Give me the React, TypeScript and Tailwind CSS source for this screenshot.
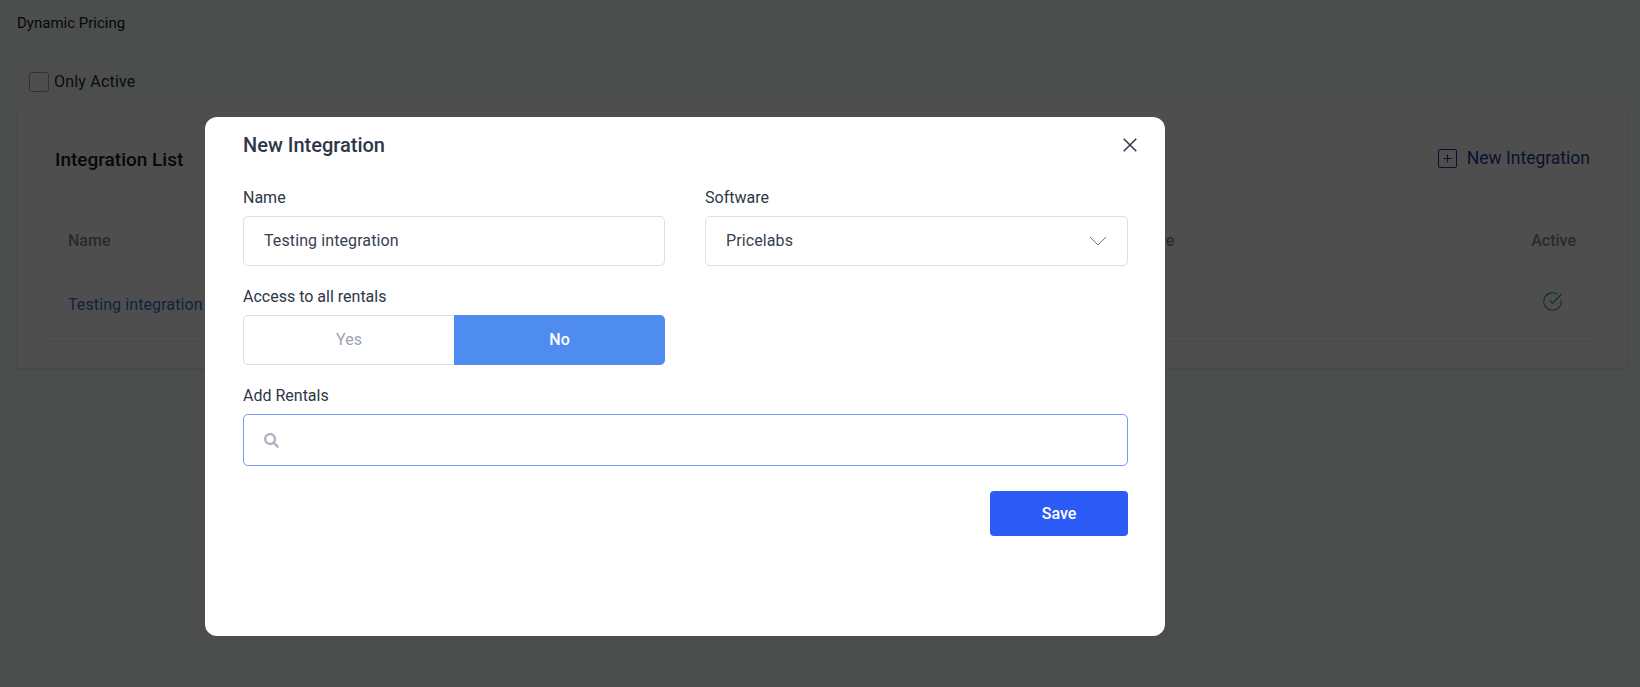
import React from 'react';
import { FaSearch } from 'react-icons/fa';
import { CircleCheckBig } from 'lucide-react';

function Label({ children }: { children: React.ReactNode }) {
  return <label className="block text-[16px] leading-[20px] text-[#2d3748]">{children}</label>;
}

export default function App() {
  return (
    <div className="relative h-[687px] overflow-hidden bg-[#f8fffb] font-['Roboto',sans-serif]">
      {/* page behind the modal */}
      <div className="px-[17px] pt-[14px]">
        <p className="text-[15px] leading-[18px] text-[#111827]">Dynamic Pricing</p>
        <div className="mt-[38px] ml-[12px] flex items-center gap-[5px]">
          <span className="h-5 w-5 rounded-[3px] border border-[#9ca3af] bg-white" />
          <span className="text-[16px] leading-6 tracking-[0.2px] text-[#1f2937]">Only Active</span>
        </div>
        <div className="mt-[13px] mr-[-5px] h-[261px] rounded-[2px] border border-[#f1f1f1] bg-white px-[29px] pt-[40px] shadow-sm">
          <div className="flex items-center justify-between pl-[8px] pr-[8px]">
            <h2 className="text-[19px] leading-6 font-medium text-[#111827]">Integration List</h2>
            <button className="flex items-center gap-[10px] text-[17.5px] leading-6 text-[#1e3a9f] -translate-y-[2px]">
              <svg width="19" height="19" viewBox="0 0 19 19" fill="none" stroke="currentColor" strokeWidth="1">
                <rect x="0.5" y="0.5" width="18" height="18" rx="1.5" />
                <path d="M9.5 5.5v8M5.5 9.5h8" />
              </svg>
              New Integration
            </button>
          </div>
          <div className="mt-[44px] flex h-[50px] items-center justify-between bg-[#fdfdfd] pl-[21px] pr-[22px] text-[16px] font-medium text-[#868c96]">
            <span>Name</span>
            <span className="ml-auto mr-[357px]">Software</span>
            <span>Active</span>
          </div>
          <div className="flex h-[76px] items-center justify-between border-b border-[#eeeeee] px-[21px] pt-[3px] text-[16px]">
            <span className="tracking-[0.1px] text-[#3b6fc9]">Testing integration</span>
            <CircleCheckBig className="mr-[14px] h-[21px] w-[21px] -translate-y-[4px] text-[#2fa84f]" strokeWidth={1.25} />
          </div>
        </div>
      </div>

      {/* modal */}
      <div className="absolute inset-0 bg-[rgba(0,0,0,0.695)] pl-[205px] pt-[117px]">
        <div className="h-[519px] w-[960px] rounded-[12px] bg-white pl-[38px] pr-[37px] pt-[16px]">
          <div className="flex items-center justify-between">
            <h3 className="text-[20px] leading-6 font-medium text-[#2d3748]">New Integration</h3>
            <button className="mr-[-9px] text-[#2d3748]">
              <svg width="14" height="14" viewBox="0 0 14 14" fill="none" stroke="currentColor" strokeWidth="1.5">
                <path d="M0.7 0.7l12.6 12.6M13.3 0.7L0.7 13.3" />
              </svg>
            </button>
          </div>

          <div className="mt-[31px] grid grid-cols-[422px_423px] gap-x-[40px]">
            <div>
              <Label>Name</Label>
              <div className="mt-[8px] flex h-[50px] items-center rounded-[5px] border border-[#dcdfe3] px-[20px] text-[16px] tracking-[0.1px] text-[#374151]">Testing integration</div>
            </div>
            <div>
              <Label>Software</Label>
              <div className="mt-[8px] flex h-[50px] items-center justify-between rounded-[5px] border border-[#dcdfe3] px-[20px] text-[16px] tracking-[0.1px] text-[#374151]">
                Pricelabs
                <svg width="18" height="10" viewBox="0 0 18 10" fill="none" stroke="#6b7280" strokeWidth="1">
                  <path d="M1 1l8 8 8-8" />
                </svg>
              </div>
            </div>
          </div>

          <div className="mt-[21px]">
            <Label>Access to all rentals</Label>
            <div className="mt-[8px] grid h-[50px] w-[422px] grid-cols-2 text-[16px]">
              <div className="flex items-center justify-center rounded-l-[5px] border border-r-0 border-[#dcdfe3] text-[#9ca3af]">Yes</div>
              <div className="flex items-center justify-center rounded-r-[5px] bg-[#4f8cef] font-medium text-white">No</div>
            </div>
          </div>

          <div className="mt-[21px]">
            <Label>Add Rentals</Label>
            <div className="mt-[8px] flex h-[52px] items-center rounded-[5px] border border-[#7c97f0] pl-[20px]">
              <FaSearch className="h-[15px] w-[15px] text-[#aeb5bf]" />
            </div>
          </div>

          <div className="mt-[25px] flex justify-end">
            <button className="h-[45px] w-[138px] rounded-[4px] bg-[#2d5bf5] text-[16px] font-medium text-white">Save</button>
          </div>
        </div>
      </div>
    </div>
  );
}
